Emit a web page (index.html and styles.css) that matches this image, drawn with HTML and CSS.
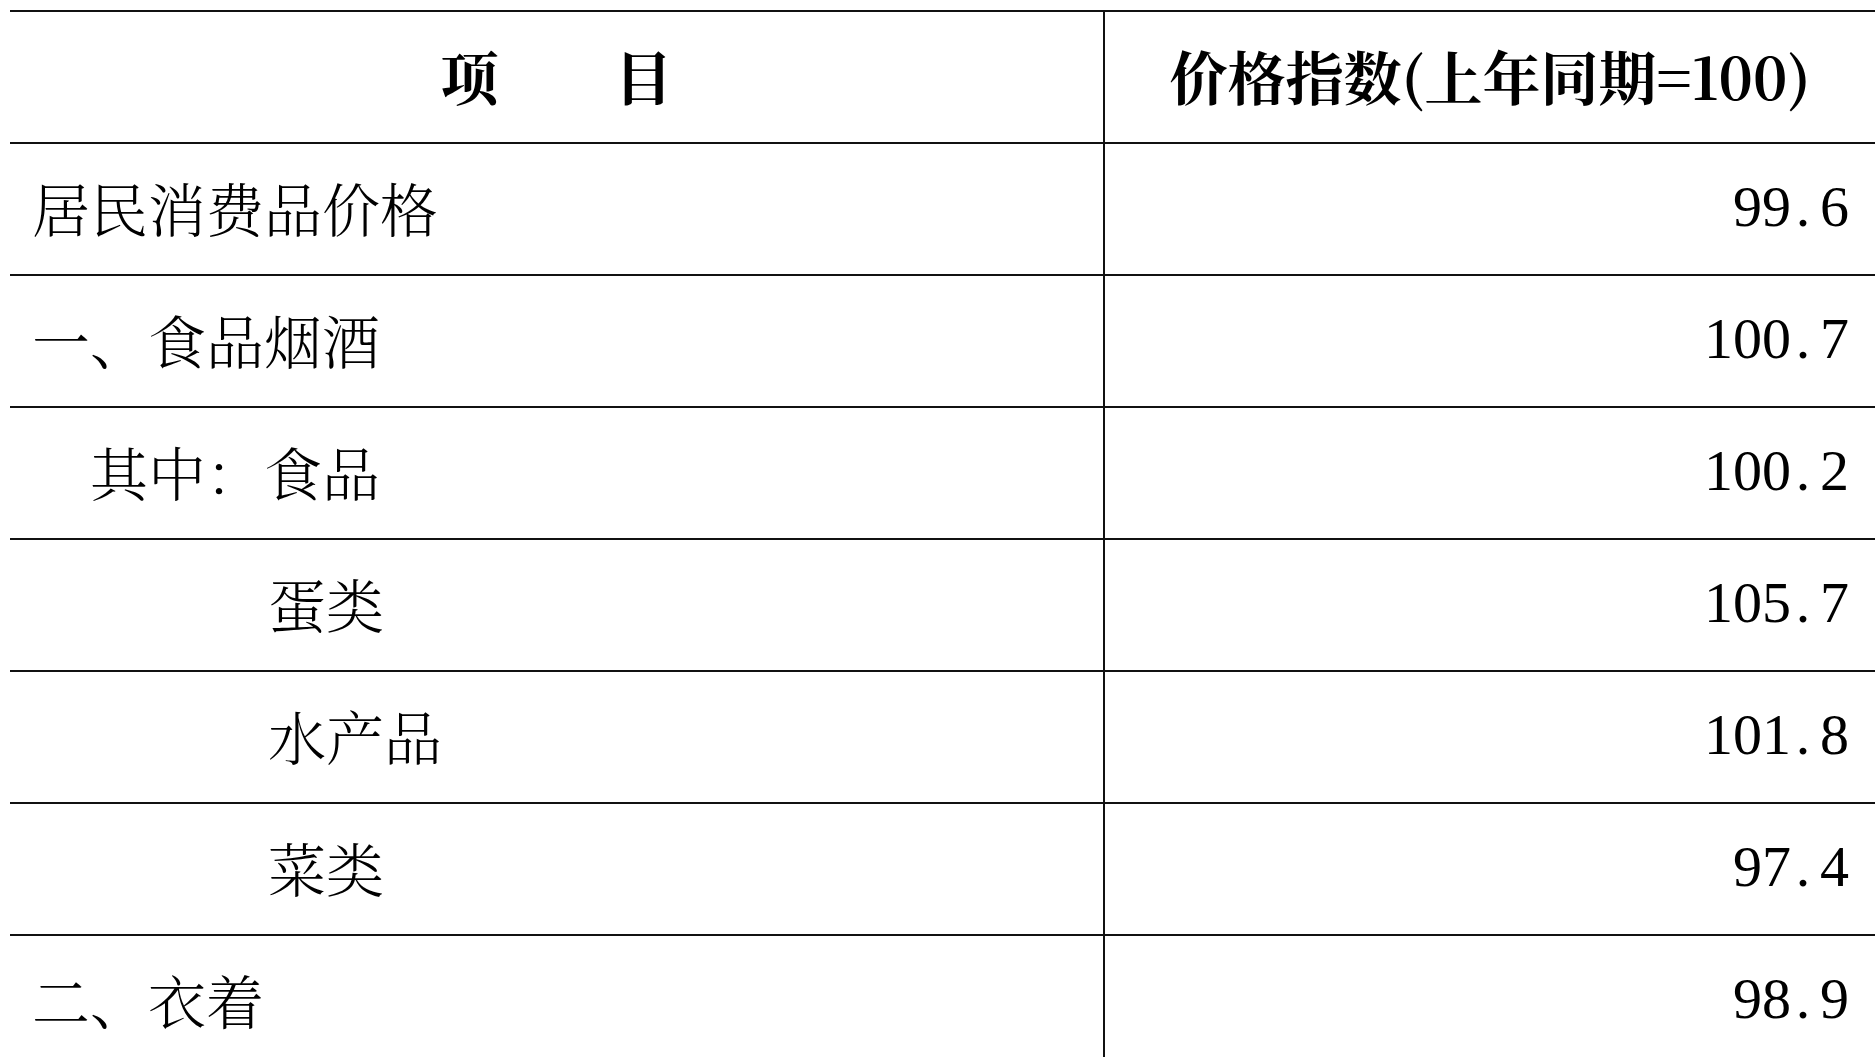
FILE: index.html
```html
<!DOCTYPE html>
<html lang="zh-CN">
<head>
<meta charset="utf-8">
<title>价格指数</title>
<link rel="stylesheet" href="styles.css">
</head>
<body>
<table class="cpi">
  <thead>
    <tr>
      <th class="item-head">项　　目</th>
      <th class="num-head">价格指数(上年同期=100)</th>
    </tr>
  </thead>
  <tbody>
    <tr><td class="item">居民消费品价格</td><td class="num">99<span class="dot">.</span>6</td></tr>
    <tr><td class="item">一、食品烟酒</td><td class="num">100<span class="dot">.</span>7</td></tr>
    <tr><td class="item indent1">其中：食品</td><td class="num">100<span class="dot">.</span>2</td></tr>
    <tr><td class="item indent4">蛋类</td><td class="num">105<span class="dot">.</span>7</td></tr>
    <tr><td class="item indent4">水产品</td><td class="num">101<span class="dot">.</span>8</td></tr>
    <tr><td class="item indent4">菜类</td><td class="num">97<span class="dot">.</span>4</td></tr>
    <tr><td class="item">二、衣着</td><td class="num">98<span class="dot">.</span>9</td></tr>
  </tbody>
</table>
</body>
</html>
```
FILE: styles.css
```css
html, body {
  margin: 0;
  padding: 0;
  background: #ffffff;
  overflow: hidden;
}

body {
  padding: 10px 0 0 10px;
  color: #000;
  font-family: "Noto Serif CJK SC", "Noto Sans CJK SC", "Liberation Serif", serif;
  font-size: 58px;
}

.cpi {
  border-collapse: collapse;
  width: 1865px;
  table-layout: fixed;
}

.cpi th,
.cpi td {
  height: 126px;
  padding: 0 0 4px 0;
  border-top: 2px solid #111;
  vertical-align: middle;
  line-height: 1;
}

.cpi th {
  font-weight: 700;
  text-align: center;
}

.item-head {
  width: 1093px;
}

.num-head {
  border-left: 2px solid #111;
}

.item {
  text-align: left;
  padding-left: 22px !important;
  font-weight: 300;
  white-space: nowrap;
}

.indent1 {
  padding-left: calc(22px + 1em) !important;
}

.indent4 {
  padding-left: calc(26px + 4em) !important;
}

.num {
  border-left: 2px solid #111;
  text-align: right;
  padding-right: 26px !important;
  font-family: "Liberation Serif", serif;
}

.dot {
  display: inline-block;
  width: 0.5em;
  text-align: left;
  padding-left: 0.08em;
  box-sizing: border-box;
}
```
